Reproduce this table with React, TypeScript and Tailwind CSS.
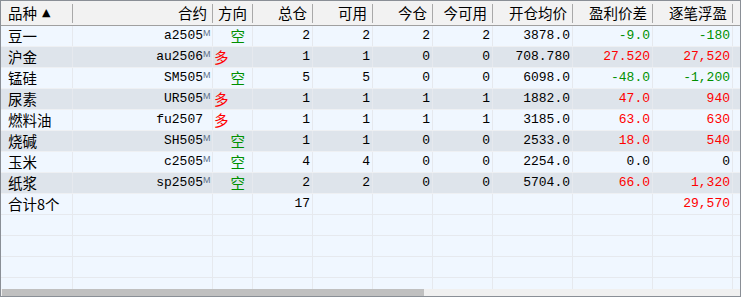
import React from "react";

type Row = {
  name: string;
  code: string;
  m: boolean;
  dir: "多" | "空";
  total: number;
  avail: number;
  today: number;
  todayAvail: number;
  price: string;
  diff: string;
  pnl: string;
};

const rows: Row[] = [
  { name: "豆一", code: "a2505", m: true, dir: "空", total: 2, avail: 2, today: 2, todayAvail: 2, price: "3878.0", diff: "-9.0", pnl: "-180" },
  { name: "沪金", code: "au2506", m: true, dir: "多", total: 1, avail: 1, today: 0, todayAvail: 0, price: "708.780", diff: "27.520", pnl: "27,520" },
  { name: "锰硅", code: "SM505", m: true, dir: "空", total: 5, avail: 5, today: 0, todayAvail: 0, price: "6098.0", diff: "-48.0", pnl: "-1,200" },
  { name: "尿素", code: "UR505", m: true, dir: "多", total: 1, avail: 1, today: 1, todayAvail: 1, price: "1882.0", diff: "47.0", pnl: "940" },
  { name: "燃料油", code: "fu2507", m: false, dir: "多", total: 1, avail: 1, today: 1, todayAvail: 1, price: "3185.0", diff: "63.0", pnl: "630" },
  { name: "烧碱", code: "SH505", m: true, dir: "空", total: 1, avail: 1, today: 0, todayAvail: 0, price: "2533.0", diff: "18.0", pnl: "540" },
  { name: "玉米", code: "c2505", m: true, dir: "空", total: 4, avail: 4, today: 0, todayAvail: 0, price: "2254.0", diff: "0.0", pnl: "0" },
  { name: "纸浆", code: "sp2505", m: true, dir: "空", total: 2, avail: 2, today: 0, todayAvail: 0, price: "5704.0", diff: "66.0", pnl: "1,320" },
];

const colW = ["w-[72px]", "w-[140px]", "w-[40px]", "w-[60px]", "w-[60px]", "w-[60px]", "w-[60px]", "w-[80px]", "w-[80px]", "w-[80px]"];

const tone = (v: string) => {
  if (v.startsWith("-")) return "text-[#009000]";
  if (v === "0" || v === "0.0") return "text-black";
  return "text-[#ff0000]";
};

const Cell = ({ i, children, className = "" }: { i: number; children?: React.ReactNode; className?: string }) => (
  <div className={`${colW[i]} shrink-0 h-full border-r border-[#e6e9ee] flex items-center overflow-hidden whitespace-nowrap ${className}`}>
    {children}
  </div>
);

const HeadCell = ({ i, children, left }: { i: number; children: React.ReactNode; left?: boolean }) => (
  <div className={`${colW[i]} shrink-0 h-full flex items-center`}>
    <div className={`flex-1 flex items-center ${left ? "justify-start pl-[7px]" : "justify-end pr-[5px]"}`}>{children}</div>
    <div className="w-px h-[19px] bg-[#a9a9a9]" />
  </div>
);

const cjk = "text-[14.5px] [font-family:'Noto_Sans_CJK_SC',sans-serif]";

export default function App() {
  return (
    <div className="w-[741px] h-[297px] border border-[#8a8f96] bg-[#f0f7ff] flex flex-col overflow-hidden text-[13px] text-black [font-family:'Liberation_Mono','Noto_Sans_CJK_SC',monospace]">
      {/* header */}
      <div className="h-[25px] shrink-0 flex bg-[#f2f2f2] border-b border-[#a0a0a0]">
        <HeadCell i={0} left>
          <span className={cjk}>品种</span>
          <span className="ml-[5px] text-[11px] [font-family:'DejaVu_Sans',sans-serif]">▲</span>
        </HeadCell>
        <HeadCell i={1}><span className={cjk}>合约</span></HeadCell>
        <HeadCell i={2} left><span className={`${cjk} -ml-[2px]`}>方向</span></HeadCell>
        <HeadCell i={3}><span className={cjk}>总仓</span></HeadCell>
        <HeadCell i={4}><span className={cjk}>可用</span></HeadCell>
        <HeadCell i={5}><span className={cjk}>今仓</span></HeadCell>
        <HeadCell i={6}><span className={cjk}>今可用</span></HeadCell>
        <HeadCell i={7}><span className={cjk}>开仓均价</span></HeadCell>
        <HeadCell i={8}><span className={cjk}>盈利价差</span></HeadCell>
        <HeadCell i={9}><span className={cjk}>逐笔浮盈</span></HeadCell>
        <div className="flex-1" />
      </div>

      {/* data rows */}
      {rows.map((r, idx) => (
        <div
          key={r.name}
          className={`h-[21px] shrink-0 flex border-b border-[#eef0f3] ${idx % 2 === 1 ? "bg-[#dee4eb]" : "bg-[#f0f7ff]"}`}
        >
          <Cell i={0} className="pl-[7px]"><span className={cjk}>{r.name}</span></Cell>
          <Cell i={1} className="justify-end pr-[3px]">
            <span>{r.code}</span>
            <span className={`w-[6px] self-start mt-[3px] text-[9px] leading-none text-[#5b6f86] [font-family:'Liberation_Sans',sans-serif] ${r.m ? "" : "invisible"}`}>M</span>
          </Cell>
          <Cell i={2} className={r.dir === "多" ? "justify-start pl-[1px]" : "justify-end pr-[7px]"}>
            <span className={`${cjk} ${r.dir === "多" ? "text-[#ff0000]" : "text-[#009000]"}`}>{r.dir}</span>
          </Cell>
          <Cell i={3} className="justify-end pr-[2px]">{r.total}</Cell>
          <Cell i={4} className="justify-end pr-[2px]">{r.avail}</Cell>
          <Cell i={5} className="justify-end pr-[2px]">{r.today}</Cell>
          <Cell i={6} className="justify-end pr-[2px]">{r.todayAvail}</Cell>
          <Cell i={7} className="justify-end pr-[2px]">{r.price}</Cell>
          <Cell i={8} className={`justify-end pr-[2px] ${tone(r.diff)}`}>{r.diff}</Cell>
          <Cell i={9} className={`justify-end pr-[2px] ${tone(r.pnl)}`}>{r.pnl}</Cell>
          <div className="flex-1" />
        </div>
      ))}

      {/* total row */}
      <div className="h-[21px] shrink-0 flex border-b border-[#e6e9ee]">
        <Cell i={0} className="pl-[7px]"><span className={cjk}>合计8个</span></Cell>
        <Cell i={1} />
        <Cell i={2} />
        <Cell i={3} className="justify-end pr-[2px]">17</Cell>
        <Cell i={4} />
        <Cell i={5} />
        <Cell i={6} />
        <Cell i={7} />
        <Cell i={8} />
        <Cell i={9} className="justify-end pr-[2px] text-[#ff0000]">29,570</Cell>
        <div className="flex-1" />
      </div>

      {/* empty filler rows */}
      <div className="flex-1 overflow-hidden">
        {[0, 1, 2, 3].map((k) => (
          <div key={k} className="h-[21px] flex border-b border-[#e6e9ee]">
            {colW.map((_, i) => (
              <Cell key={i} i={i} />
            ))}
            <div className="flex-1" />
          </div>
        ))}
      </div>

      {/* horizontal scrollbar */}
      <div className="h-[7px] shrink-0 bg-[#f0f0f0] flex items-stretch px-px">
        <div className="w-[422px] bg-[#c0c0c0]" />
      </div>
    </div>
  );
}
